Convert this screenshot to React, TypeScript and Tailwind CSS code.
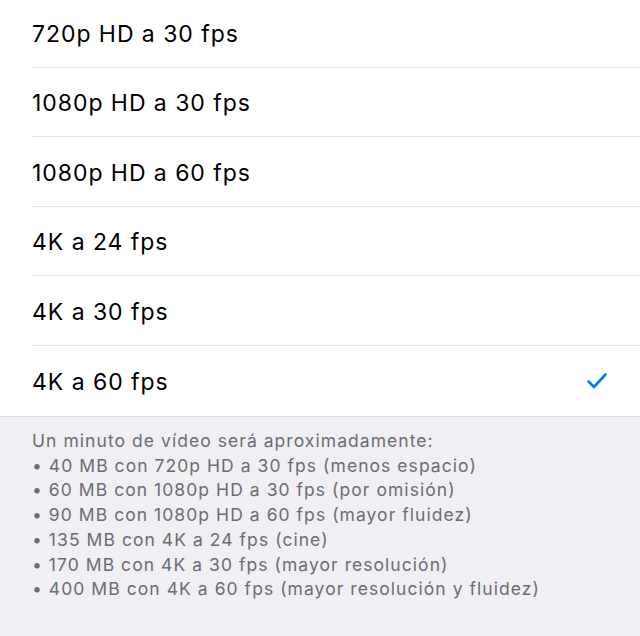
export default function App() {
  const rows = [
    "720p HD a 30 fps",
    "1080p HD a 30 fps",
    "1080p HD a 60 fps",
    "4K a 24 fps",
    "4K a 30 fps",
    "4K a 60 fps",
  ];
  const notes = [
    "Un minuto de vídeo será aproximadamente:",
    "• 40 MB con 720p HD a 30 fps (menos espacio)",
    "• 60 MB con 1080p HD a 30 fps (por omisión)",
    "• 90 MB con 1080p HD a 60 fps (mayor fluidez)",
    "• 135 MB con 4K a 24 fps (cine)",
    "• 170 MB con 4K a 30 fps (mayor resolución)",
    "• 400 MB con 4K a 60 fps (mayor resolución y fluidez)",
  ];
  return (
    <div className="w-[640px] h-[636px] bg-[#efeff4] overflow-hidden" style={{ fontFamily: "Inter, 'Noto Sans', sans-serif" }}>
      <div className="bg-white -mt-[2px] border-b border-[#dcdce0]">
        {rows.map((r, i) => (
          <div key={r} className="pl-[32px]">
            <div className={`h-[69.6px] flex items-center pr-[32px] pt-[3px] ${i < rows.length - 1 ? "border-b border-[#e3e3e6]" : ""}`}>
              <span className="text-[23px] text-black tracking-[0.95px]">{r}</span>
              {i === rows.length - 1 && (
                <svg className="ml-auto -mt-[3px]" width="22" height="18" viewBox="0 0 22 18">
                  <path d="M2.5 9.5 L8 15 L19.5 2.5" fill="none" stroke="#007aff" strokeWidth="2.6" strokeLinecap="round" strokeLinejoin="round" />
                </svg>
              )}
            </div>
          </div>
        ))}
      </div>
      <div className="pl-[32px] pt-[12.5px] text-[17.5px] leading-[24.7px] tracking-[1.05px] text-[#6d6d72]">
        {notes.map((n) => (
          <div key={n}>{n}</div>
        ))}
      </div>
    </div>
  );
}
